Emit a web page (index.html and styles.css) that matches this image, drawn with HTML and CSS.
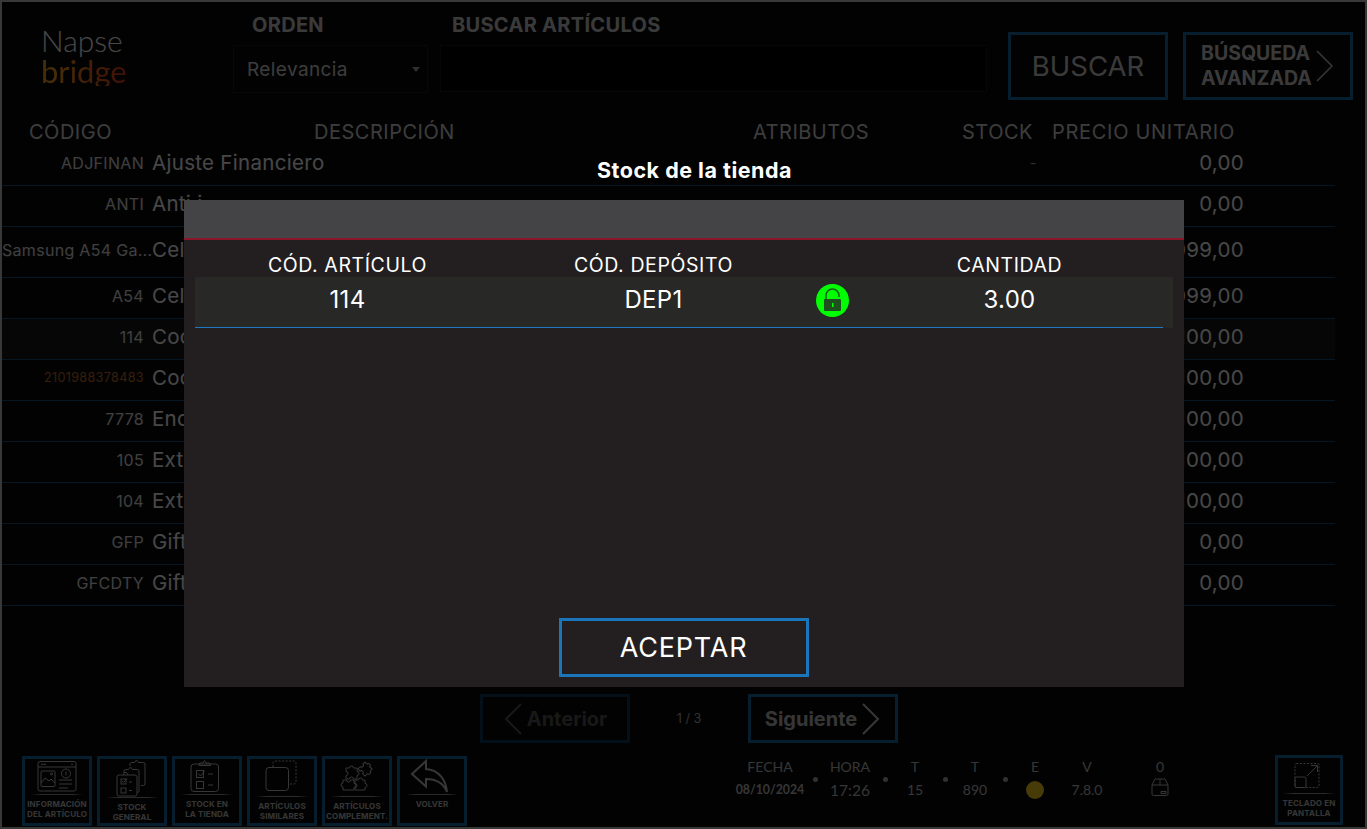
FILE: index.html
```html
<!DOCTYPE html>
<html lang="es">
<head>
	<meta charset="utf-8"/>
	<title>Stock de la tienda</title>
	<link rel="stylesheet" href="styles.css">
</head>
<body>
<div class="screen">
	<div class="top">
		<div class="logo">
			<span class="logo-napse">Napse</span>
			<span class="logo-bridge">bridge</span>
		</div>
		<div class="field field-orden">
			<label class="field-label">ORDEN</label>
			<div class="select-wrap">
				<select class="select"><option>Relevancia</option></select>
			</div>
		</div>
		<div class="field field-buscar">
			<label class="field-label">BUSCAR ARTÍCULOS</label>
			<input class="search" type="text">
		</div>
		<button class="btn btn-buscar" type="button">BUSCAR</button>
		<button class="btn btn-avanzada" type="button">
			<span>BÚSQUEDA<br>AVANZADA</span>
			<svg width="20" height="32" viewBox="0 0 20 32"><path class="line line-mid" d="M2 1l15 15L2 31"/></svg>
		</button>
	</div>

	<div class="thead">
		<span class="th-code">CÓDIGO</span>
		<span class="th-desc">DESCRIPCIÓN</span>
		<span class="th-attr">ATRIBUTOS</span>
		<span class="th-stock">STOCK</span>
		<span class="th-price">PRECIO UNITARIO</span>
	</div>

	<div class="rows">
		<div class="row"><span class="code">ADJFINAN</span><span class="desc">Ajuste Financiero</span><span class="stock">-</span><span class="price">0,00</span></div>
		<div class="row"><span class="code">ANTI</span><span class="desc">Anti i</span><span class="stock"></span><span class="price">0,00</span></div>
		<div class="row row-tall"><span class="code">Samsung A54 Ga...</span><span class="desc">Celular</span><span class="stock"></span><span class="price">1.099,00</span></div>
		<div class="row"><span class="code">A54</span><span class="desc">Celular</span><span class="stock"></span><span class="price">1.099,00</span></div>
		<div class="row row-hover"><span class="code">114</span><span class="desc">Coca</span><span class="stock"></span><span class="price">100,00</span></div>
		<div class="row"><span class="code code-orange">2101988378483</span><span class="desc">Coca</span><span class="stock"></span><span class="price">100,00</span></div>
		<div class="row"><span class="code">7778</span><span class="desc">Encendedor</span><span class="stock"></span><span class="price">100,00</span></div>
		<div class="row"><span class="code">105</span><span class="desc">Extensión</span><span class="stock"></span><span class="price">100,00</span></div>
		<div class="row"><span class="code">104</span><span class="desc">Extensión</span><span class="stock"></span><span class="price">100,00</span></div>
		<div class="row"><span class="code">GFP</span><span class="desc">Gift Card</span><span class="stock"></span><span class="price">0,00</span></div>
		<div class="row"><span class="code">GFCDTY</span><span class="desc">Gift Card</span><span class="stock"></span><span class="price">0,00</span></div>
	</div>

	<div class="pager">
		<button class="btn btn-page btn-disabled" type="button">
			<svg width="20" height="32" viewBox="0 0 20 32"><path class="line line-wide" d="M18 1L3 16l15 15"/></svg>
			<span>Anterior</span>
		</button>
		<span class="page-count">1 / 3</span>
		<button class="btn btn-page" type="button">
			<span>Siguiente</span>
			<svg width="20" height="32" viewBox="0 0 20 32"><path class="line line-wide" d="M2 1l15 15L2 31"/></svg>
		</button>
	</div>

	<div class="bottom">
		<div class="tools">
			<button class="tool" type="button">
				<svg width="64" height="35" viewBox="0 0 64 35">
					<rect class="line" x="13" y="2.500" width="38" height="29.500" rx="2"/>
					<path class="line" d="M13 8h38M16 5.300h5M46 5.300h2M34 21h13M34 25h13M34 29h9"/>
					<rect class="line" x="16" y="12" width="14" height="15.500" rx="1"/>
					<path class="line" d="M16 24l4-5 4 3 2-2 4 4"/>
					<circle class="line" cx="26.500" cy="15" r="1"/>
					<circle class="line" cx="41" cy="14.500" r="4.500"/>
					<path class="line" d="M41 12.500v4"/>
				</svg>
				<span class="tool-label">INFORMACIÓN<br>DEL ARTÍCULO</span>
			</button>
			<button class="tool" type="button">
				<svg width="64" height="38" viewBox="0 0 64 38">
					<path class="line" d="M30 7V5a1.500 1.500 0 0 1 1.500-1.500h3l2-2.500 2 2.500h5A1.500 1.500 0 0 1 45 5v20a1.500 1.500 0 0 1-1.500 1.500H41"/>
					<path class="line" d="M24 14v-2a1.500 1.500 0 0 1 1.500-1.500h3l2-2.500 2 2.500h5A1.500 1.500 0 0 1 39 12v20a1.500 1.500 0 0 1-1.500 1.500"/>
					<rect class="line" x="17" y="16" width="20" height="21" rx="2"/>
					<path class="line" d="M23 16l1.500-2.500h2L28 16"/>
					<rect class="line" x="21" y="20" width="5" height="5"/>
					<rect class="line" x="21" y="29" width="5" height="5"/>
					<path class="line" d="M22 22l1.500 1.500L27 19.500M29 23h3M29 31.500h3"/>
				</svg>
				<span class="tool-label">STOCK<br>GENERAL</span>
			</button>
			<button class="tool" type="button">
				<svg width="64" height="35" viewBox="0 0 64 35">
					<rect class="line" x="16" y="5" width="27.500" height="27.500" rx="3"/>
					<path class="line" d="M24 5l1-1h3l1.500-2.500L31 4h3.500l1 1v1.500H24z"/>
					<rect class="line" x="21.500" y="11.500" width="7" height="7"/>
					<rect class="line" x="21.500" y="22.500" width="7" height="7"/>
					<path class="line" d="M23 14.500l2.500 2.500 4-5M33 15h5M33 26h5"/>
				</svg>
				<span class="tool-label">STOCK EN<br>LA TIENDA</span>
			</button>
			<button class="tool" type="button">
				<svg width="64" height="37" viewBox="0 0 64 37">
					<path class="line dashed" d="M23 8V4a2 2 0 0 1 2-2h19a2 2 0 0 1 2 2v19a2 2 0 0 1-2 2h-5"/>
					<rect class="line" x="16" y="8.500" width="22.500" height="23" rx="3"/>
				</svg>
				<span class="tool-label">ARTÍCULOS<br>SIMILARES</span>
			</button>
			<button class="tool" type="button">
				<svg width="64" height="37" viewBox="0 0 64 37">
					<path class="line" transform="translate(21 9)" d="M0 0h3.500a2 2 0 1 1 4 0H11v3.500a2 2 0 1 1 0 4V11H7.500a2 2 0 1 0-4 0H0V7.500a2 2 0 1 0 0-4z"/>
					<path class="line" transform="translate(18 21)" d="M0 0h3.500a2 2 0 1 0 4 0H11v3.500a2 2 0 1 1 0 4V10H0V7a2 2 0 1 1 0-4z"/>
					<path class="line" transform="translate(30 21)" d="M0 0h3.500a2 2 0 1 1 4 0H10v3.500a2 2 0 1 1 0 4V10H0V7.500a2 2 0 1 0 0-4z"/>
					<path class="line" transform="translate(40 3) rotate(45)" d="M0 0h3a1.800 1.800 0 1 1 3.600 0H10v3a1.800 1.800 0 1 1 0 3.600V10H6.600a1.800 1.800 0 1 0-3.600 0H0V6.600a1.800 1.800 0 1 0 0-3.600z"/>
				</svg>
				<span class="tool-label">ARTÍCULOS<br>COMPLEMENT.</span>
			</button>
			<button class="tool" type="button">
				<svg width="64" height="35" viewBox="0 0 64 35">
					<path class="line line-wide" d="M26 2L12 15l14 12.500V20c9 0 17 3 21 13-1-12-8-22-21-23z"/>
				</svg>
				<span class="tool-label">VOLVER</span>
			</button>
		</div>

		<div class="status">
			<div class="cell cell-fecha"><span>FECHA</span><b>08/10/2024</b></div>
			<i class="dot"></i>
			<div class="cell cell-hora"><span>HORA</span><em class="big">17:26</em></div>
			<i class="dot"></i>
			<div class="cell cell-t1"><span>T</span><em>15</em></div>
			<i class="dot"></i>
			<div class="cell cell-t2"><span>T</span><em>890</em></div>
			<i class="dot"></i>
			<div class="cell cell-e"><span>E</span><i class="led"></i></div>
			<div class="cell cell-v"><span>V</span><em>7.8.0</em></div>
			<div class="cell cell-box"><span>0</span>
				<svg width="18" height="18" viewBox="0 0 18 18">
					<path class="line" d="M4 1h10l3 6v9a1.500 1.500 0 0 1-1.500 1.500h-13A1.500 1.500 0 0 1 1 16V7zM1 7h16M9 1v6M10 13.500h5v2h-5z"/>
				</svg>
			</div>
		</div>

		<button class="tool tool-keyboard" type="button">
			<svg width="62" height="35" viewBox="0 0 62 35">
				<rect class="line dashed" x="17" y="5.500" width="24" height="24" rx="1.500"/>
				<rect class="line" x="17" y="19" width="11" height="10.500" rx="1.500"/>
				<path class="line" d="M29 18l10-10M33 7.500h6.500V14"/>
			</svg>
			<span class="tool-label">TECLADO EN<br>PANTALLA</span>
		</button>
	</div>

	<div class="overlay">
		<h2 class="modal-title">Stock de la tienda</h2>
		<div class="modal">
			<div class="modal-head"></div>
			<div class="modal-body">
				<div class="cols">
					<span>CÓD. ARTÍCULO</span>
					<span>CÓD. DEPÓSITO</span>
					<span></span>
					<span>CANTIDAD</span>
				</div>
				<div class="stock-row">
					<div class="cols cols-data">
						<span>114</span>
						<span>DEP1</span>
						<span class="lock">
							<svg width="33" height="33" viewBox="0 0 33 33">
								<circle cx="16.500" cy="16.500" r="16.500" fill="#00ff00"/>
								<path d="M10 15v-3.500a6.500 6.500 0 0 1 13 0V13" fill="none" stroke="#1f5c1f" stroke-width="1.500"/>
								<rect x="8" y="15" width="17" height="12" rx="1" fill="#1f4f1f"/>
								<rect x="16" y="19" width="1.500" height="4" fill="#00ff00"/>
							</svg>
						</span>
						<span>3.00</span>
					</div>
				</div>
				<button class="btn-aceptar" type="button">ACEPTAR</button>
			</div>
		</div>
	</div>
</div>
</body>
</html>
```

FILE: styles.css
```css
* {
	box-sizing: border-box;
}

html, body {
	margin: 0;
	height: 100%;
	background: #0a0a0a;
	overflow: hidden;
}

body {
	font-family: "Inter", "Liberation Sans", sans-serif;
	color: #fff;
}

.screen {
	position: relative;
	width: 1367px;
	height: 829px;
	border: 2px solid #c8c8c8;
	background: #0a0a0a;
}

.line {
	fill: none;
	stroke: #c4c4c4;
	stroke-width: 1;
}

.line-mid {
	stroke-width: 1.500;
}

.line-wide {
	stroke-width: 2;
}

.dashed {
	stroke-dasharray: 2 1.500;
}

/* header */
.top {
	display: flex;
	height: 118px;
}

.logo {
	width: 231px;
	padding: 22px 0 0 39px;
	display: flex;
	flex-direction: column;
	font-family: "Lato", sans-serif;
	font-weight: 300;
}

.logo-napse {
	font-size: 30px;
	line-height: 32px;
	color: #fff;
}

.logo-bridge {
	font-size: 31px;
	font-weight: 400;
	line-height: 30px;
	width: max-content;
	background: linear-gradient(90deg, #ffb020, #e83a18);
	-webkit-background-clip: text;
	background-clip: text;
	color: transparent;
}

.field {
	display: flex;
	flex-direction: column;
	padding-top: 12px;
}

.field-orden {
	width: 195px;
}

.field-buscar {
	width: 547px;
	margin-left: 12px;
}

.field-label {
	height: 22px;
	margin-bottom: 9px;
	font-size: 20px;
	line-height: 22px;
	font-weight: 700;
	letter-spacing: .3px;
	color: #d0d0d0;
}

.field-orden .field-label {
	padding-left: 19px;
}

.field-buscar .field-label {
	padding-left: 12px;
}

.select-wrap {
	position: relative;
}

.select-wrap::after {
	content: "";
	position: absolute;
	right: 8px;
	top: 22px;
	border: 4px solid transparent;
	border-top: 5px solid #aaa;
	border-bottom: 0;
}

.select {
	width: 100%;
	height: 48px;
	padding-left: 13px;
	appearance: none;
	background: #0a0a0a;
	border: 1px solid #1c1c1c;
	font: 19px "Inter", sans-serif;
	letter-spacing: .4px;
	color: #d8d8d8;
}

.search {
	height: 47px;
	background: #000;
	border: 1px solid #1c1c1c;
}

.btn {
	display: flex;
	align-items: center;
	justify-content: center;
	background: transparent;
	border: 3px solid #1a6ea8;
	font-family: inherit;
	color: #d0d0d0;
}

.btn-buscar {
	width: 160px;
	height: 68px;
	margin: 30px 0 0 21px;
	font-size: 27.500px;
}

.btn-avanzada {
	width: 170px;
	height: 68px;
	margin: 30px 0 0 15px;
	justify-content: flex-start;
	gap: 3px;
	padding: 0 0 0 15px;
	font-size: 19.500px;
	font-weight: 700;
	line-height: 25px;
	text-align: left;
}

/* table */
.thead {
	display: flex;
	height: 25px;
	padding-left: 27px;
	font-size: 20px;
	line-height: 25px;
	letter-spacing: .5px;
	color: #d8d8d8;
}

.th-code {
	width: 285px;
}

.th-desc {
	width: 439px;
}

.th-attr {
	width: 209px;
}

.th-stock {
	width: 90px;
}

.th-price {
	letter-spacing: .7px;
}

.row {
	display: grid;
	grid-template-columns: 142px 849px 80px 171px;
	align-items: center;
	width: 1333px;
	height: 41px;
	padding-bottom: 5px;
	border-bottom: 1px solid #17507a;
}

.row-tall {
	height: 51px;
}

.row-hover {
	background: #181818;
}

.code {
	text-align: right;
	font-size: 16px;
	letter-spacing: .3px;
	color: #e0e0e0;
	white-space: nowrap;
}

.code-orange {
	font-size: 12.700px;
	color: #c06a2c;
}

.desc {
	padding-left: 8px;
	font-size: 20.500px;
	letter-spacing: .3px;
	color: #fff;
}

.stock {
	text-align: center;
	font-size: 14px;
	color: #aaa;
}

.price {
	text-align: right;
	font-size: 20.500px;
	letter-spacing: .3px;
	color: #fff;
}

/* pager */
.pager {
	display: flex;
	align-items: center;
	margin: 88px 0 0 478px;
	height: 49px;
}

.btn-page {
	width: 150px;
	height: 49px;
	gap: 4px;
	font-size: 20px;
	font-weight: 700;
	color: #c0c0c0;
}

.btn-disabled {
	border-color: #0e3a5a;
	color: #585858;
}

.btn-disabled .line {
	stroke: #585858;
}

.page-count {
	width: 118px;
	text-align: center;
	font-size: 12.500px;
	color: #b0b0b0;
}

/* footer */
.bottom {
	display: flex;
	margin-top: 13px;
	padding-left: 20px;
}

.tools {
	display: flex;
	gap: 5px;
}

.tool {
	display: flex;
	flex-direction: column;
	align-items: center;
	width: 70px;
	height: 70px;
	padding: 0;
	background: transparent;
	border: 3px solid #1a6ea8;
	font-family: inherit;
}

.tool svg {
	display: block;
	flex: none;
}

.tool-label {
	width: 100%;
	padding-top: 5px;
	background: linear-gradient(90deg, transparent, #999 20%, #999 80%, transparent) top center / 52px 1px no-repeat;
	font-size: 8px;
	line-height: 10px;
	font-weight: 700;
	letter-spacing: .15px;
	white-space: nowrap;
	text-align: center;
	color: #c0c0c0;
}

.tool-keyboard {
	width: 68px;
	margin: -1px 22px 0 auto;
}

.status {
	display: flex;
	align-items: center;
	height: 44px;
	margin-left: 263px;
	font-family: "Lato", sans-serif;
	color: #c0c0c0;
}

.cell {
	display: flex;
	flex-direction: column;
	align-items: center;
	height: 44px;
	font-size: 14px;
	line-height: 22px;
}

.cell em {
	font-style: normal;
	margin-top: 1px;
}

.cell b {
	margin-top: 1px;
	font-size: 12.300px;
}

.big {
	font-size: 15.500px;
}

.dot {
	flex: none;
	width: 5px;
	height: 5px;
	margin-top: 2px;
	border-radius: 50%;
	background: #b0b0b0;
}

.cell-fecha {
	width: 80px;
	margin-right: 3px;
}

.cell-hora {
	width: 60px;
	margin: 0 3px 0 2px;
}

.cell-t1 {
	width: 48px;
	margin: 0 4px 0 3px;
}

.cell-t2 {
	width: 50px;
	margin: 0 3px 0 2px;
}

.cell-e {
	width: 50px;
	margin-left: 2px;
}

.cell-v {
	width: 54px;
}

.cell-box {
	width: 92px;
}

.led {
	display: block;
	width: 18px;
	height: 18px;
	margin-top: 3px;
	border-radius: 50%;
	background: #ffd21e;
}

/* dialog */
.overlay {
	position: absolute;
	inset: -2px;
	display: flex;
	flex-direction: column;
	align-items: center;
	padding-top: 158px;
	background: rgba(0, 0, 0, .72);
}

.modal-title {
	margin: 0 0 18px 22px;
	height: 24px;
	font-size: 21.500px;
	line-height: 24px;
	font-weight: 700;
	letter-spacing: .5px;
}

.modal {
	display: flex;
	flex-direction: column;
	width: 1000px;
	height: 487px;
	background: #231f20;
}

.modal-head {
	height: 40px;
	background: #444446;
	border-bottom: 2px solid #8a1528;
}

.modal-body {
	flex: 1;
	display: flex;
	flex-direction: column;
	padding: 0 11px;
}

.cols {
	display: grid;
	grid-template-columns: 306px 306px 50px 306px;
	width: 968px;
	height: 37px;
	padding-top: 13px;
	font-size: 19.500px;
	line-height: 24px;
	letter-spacing: .6px;
	text-align: center;
}

.stock-row {
	height: 51px;
	background: #282827;
}

.cols-data {
	height: 51px;
	padding: 0 0 4px;
	align-items: center;
	border-bottom: 1px solid #1f78c0;
	font-size: 24px;
	letter-spacing: .3px;
}

.lock {
	display: flex;
	justify-content: center;
	padding-left: 1px;
}

.btn-aceptar {
	align-self: center;
	width: 250px;
	height: 59px;
	margin: auto 0 10px;
	background: transparent;
	border: 3px solid #1a75bb;
	font: 27px "Inter", sans-serif;
	letter-spacing: .8px;
	color: #fff;
}
```
